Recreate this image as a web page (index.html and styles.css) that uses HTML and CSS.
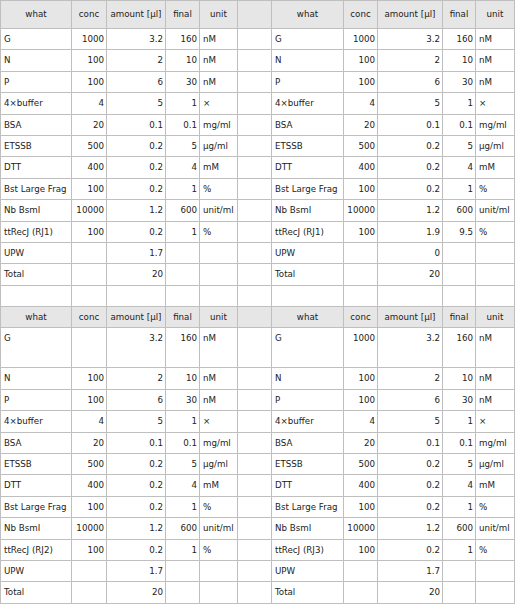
FILE: index.html
```html
<!DOCTYPE html>
<html>
<head>
<meta charset="utf-8">
<link rel="stylesheet" href="styles.css">
</head>
<body>
<table class="sheet">
<colgroup>
<col class="c71"><col class="c35"><col class="c59"><col class="c34"><col class="c38"><col class="c34">
<col class="c72"><col class="c34"><col class="c65"><col class="c33"><col class="c39">
</colgroup>
<tbody>
<tr class="hdr hdr1"><td>what</td><td>conc</td><td>amount [μl]</td><td>final</td><td>unit</td><td></td><td>what</td><td>conc</td><td>amount [μl]</td><td>final</td><td>unit</td></tr>
<tr><td>G</td><td class="n">1000</td><td class="n">3.2</td><td class="n">160</td><td>nM</td><td></td><td>G</td><td class="n">1000</td><td class="n">3.2</td><td class="n">160</td><td>nM</td></tr>
<tr><td>N</td><td class="n">100</td><td class="n">2</td><td class="n">10</td><td>nM</td><td></td><td>N</td><td class="n">100</td><td class="n">2</td><td class="n">10</td><td>nM</td></tr>
<tr><td>P</td><td class="n">100</td><td class="n">6</td><td class="n">30</td><td>nM</td><td></td><td>P</td><td class="n">100</td><td class="n">6</td><td class="n">30</td><td>nM</td></tr>
<tr><td>4×buffer</td><td class="n">4</td><td class="n">5</td><td class="n">1</td><td>×</td><td></td><td>4×buffer</td><td class="n">4</td><td class="n">5</td><td class="n">1</td><td>×</td></tr>
<tr><td>BSA</td><td class="n">20</td><td class="n">0.1</td><td class="n">0.1</td><td>mg/ml</td><td></td><td>BSA</td><td class="n">20</td><td class="n">0.1</td><td class="n">0.1</td><td>mg/ml</td></tr>
<tr><td>ETSSB</td><td class="n">500</td><td class="n">0.2</td><td class="n">5</td><td>μg/ml</td><td></td><td>ETSSB</td><td class="n">500</td><td class="n">0.2</td><td class="n">5</td><td>μg/ml</td></tr>
<tr><td>DTT</td><td class="n">400</td><td class="n">0.2</td><td class="n">4</td><td>mM</td><td></td><td>DTT</td><td class="n">400</td><td class="n">0.2</td><td class="n">4</td><td>mM</td></tr>
<tr><td>Bst Large Frag</td><td class="n">100</td><td class="n">0.2</td><td class="n">1</td><td>%</td><td></td><td>Bst Large Frag</td><td class="n">100</td><td class="n">0.2</td><td class="n">1</td><td>%</td></tr>
<tr><td>Nb BsmI</td><td class="n">10000</td><td class="n">1.2</td><td class="n">600</td><td>unit/ml</td><td></td><td>Nb BsmI</td><td class="n">10000</td><td class="n">1.2</td><td class="n">600</td><td>unit/ml</td></tr>
<tr><td>ttRecJ (RJ1)</td><td class="n">100</td><td class="n">0.2</td><td class="n">1</td><td>%</td><td></td><td>ttRecJ (RJ1)</td><td class="n">100</td><td class="n">1.9</td><td class="n">9.5</td><td>%</td></tr>
<tr><td>UPW</td><td></td><td class="n">1.7</td><td></td><td></td><td></td><td>UPW</td><td></td><td class="n">0</td><td></td><td></td></tr>
<tr><td>Total</td><td></td><td class="n">20</td><td></td><td></td><td></td><td>Total</td><td></td><td class="n">20</td><td></td><td></td></tr>
<tr><td></td><td></td><td></td><td></td><td></td><td></td><td></td><td></td><td></td><td></td><td></td></tr>
<tr class="hdr"><td>what</td><td>conc</td><td>amount [μl]</td><td>final</td><td>unit</td><td></td><td>what</td><td>conc</td><td>amount [μl]</td><td>final</td><td>unit</td></tr>
<tr class="tall"><td>G</td><td></td><td class="n">3.2</td><td class="n">160</td><td>nM</td><td></td><td>G</td><td class="n">1000</td><td class="n">3.2</td><td class="n">160</td><td>nM</td></tr>
<tr><td>N</td><td class="n">100</td><td class="n">2</td><td class="n">10</td><td>nM</td><td></td><td>N</td><td class="n">100</td><td class="n">2</td><td class="n">10</td><td>nM</td></tr>
<tr><td>P</td><td class="n">100</td><td class="n">6</td><td class="n">30</td><td>nM</td><td></td><td>P</td><td class="n">100</td><td class="n">6</td><td class="n">30</td><td>nM</td></tr>
<tr><td>4×buffer</td><td class="n">4</td><td class="n">5</td><td class="n">1</td><td>×</td><td></td><td>4×buffer</td><td class="n">4</td><td class="n">5</td><td class="n">1</td><td>×</td></tr>
<tr><td>BSA</td><td class="n">20</td><td class="n">0.1</td><td class="n">0.1</td><td>mg/ml</td><td></td><td>BSA</td><td class="n">20</td><td class="n">0.1</td><td class="n">0.1</td><td>mg/ml</td></tr>
<tr><td>ETSSB</td><td class="n">500</td><td class="n">0.2</td><td class="n">5</td><td>μg/ml</td><td></td><td>ETSSB</td><td class="n">500</td><td class="n">0.2</td><td class="n">5</td><td>μg/ml</td></tr>
<tr><td>DTT</td><td class="n">400</td><td class="n">0.2</td><td class="n">4</td><td>mM</td><td></td><td>DTT</td><td class="n">400</td><td class="n">0.2</td><td class="n">4</td><td>mM</td></tr>
<tr><td>Bst Large Frag</td><td class="n">100</td><td class="n">0.2</td><td class="n">1</td><td>%</td><td></td><td>Bst Large Frag</td><td class="n">100</td><td class="n">0.2</td><td class="n">1</td><td>%</td></tr>
<tr><td>Nb BsmI</td><td class="n">10000</td><td class="n">1.2</td><td class="n">600</td><td>unit/ml</td><td></td><td>Nb BsmI</td><td class="n">10000</td><td class="n">1.2</td><td class="n">600</td><td>unit/ml</td></tr>
<tr><td>ttRecJ (RJ2)</td><td class="n">100</td><td class="n">0.2</td><td class="n">1</td><td>%</td><td></td><td>ttRecJ (RJ3)</td><td class="n">100</td><td class="n">0.2</td><td class="n">1</td><td>%</td></tr>
<tr><td>UPW</td><td></td><td class="n">1.7</td><td></td><td></td><td></td><td>UPW</td><td></td><td class="n">1.7</td><td></td><td></td></tr>
<tr><td>Total</td><td></td><td class="n">20</td><td></td><td></td><td></td><td>Total</td><td></td><td class="n">20</td><td></td><td></td></tr>
</tbody>
</table>
</body>
</html>
```
FILE: styles.css
```css
html, body {
  margin: 0;
  padding: 0;
  background: #ffffff;
}
.sheet {
  border-collapse: collapse;
  table-layout: fixed;
  width: 514px;
  font-family: "DejaVu Sans", Verdana, sans-serif;
  font-size: 8.7px;
  color: #222222;
}
.c71 { width: 71px; }
.c35 { width: 35px; }
.c59 { width: 59px; }
.c34 { width: 34px; }
.c38 { width: 38px; }
.c72 { width: 72px; }
.c65 { width: 65px; }
.c33 { width: 33px; }
.c39 { width: 39px; }
.sheet td {
  border: 1px solid #bfbfbf;
  height: 21.4px;
  padding: 0 3px;
  box-sizing: border-box;
  vertical-align: top;
  line-height: 20px;
  white-space: nowrap;
  overflow: hidden;
}
.sheet td.n {
  text-align: right;
  padding-right: 2px;
}
.sheet tr.hdr td {
  background: #e6e6e6;
  text-align: center;
  padding: 0 1px;
}
.sheet tr.hdr1 td {
  height: 27px;
  line-height: 27px;
}
.sheet tr.tall td {
  height: 40px;
}
```
